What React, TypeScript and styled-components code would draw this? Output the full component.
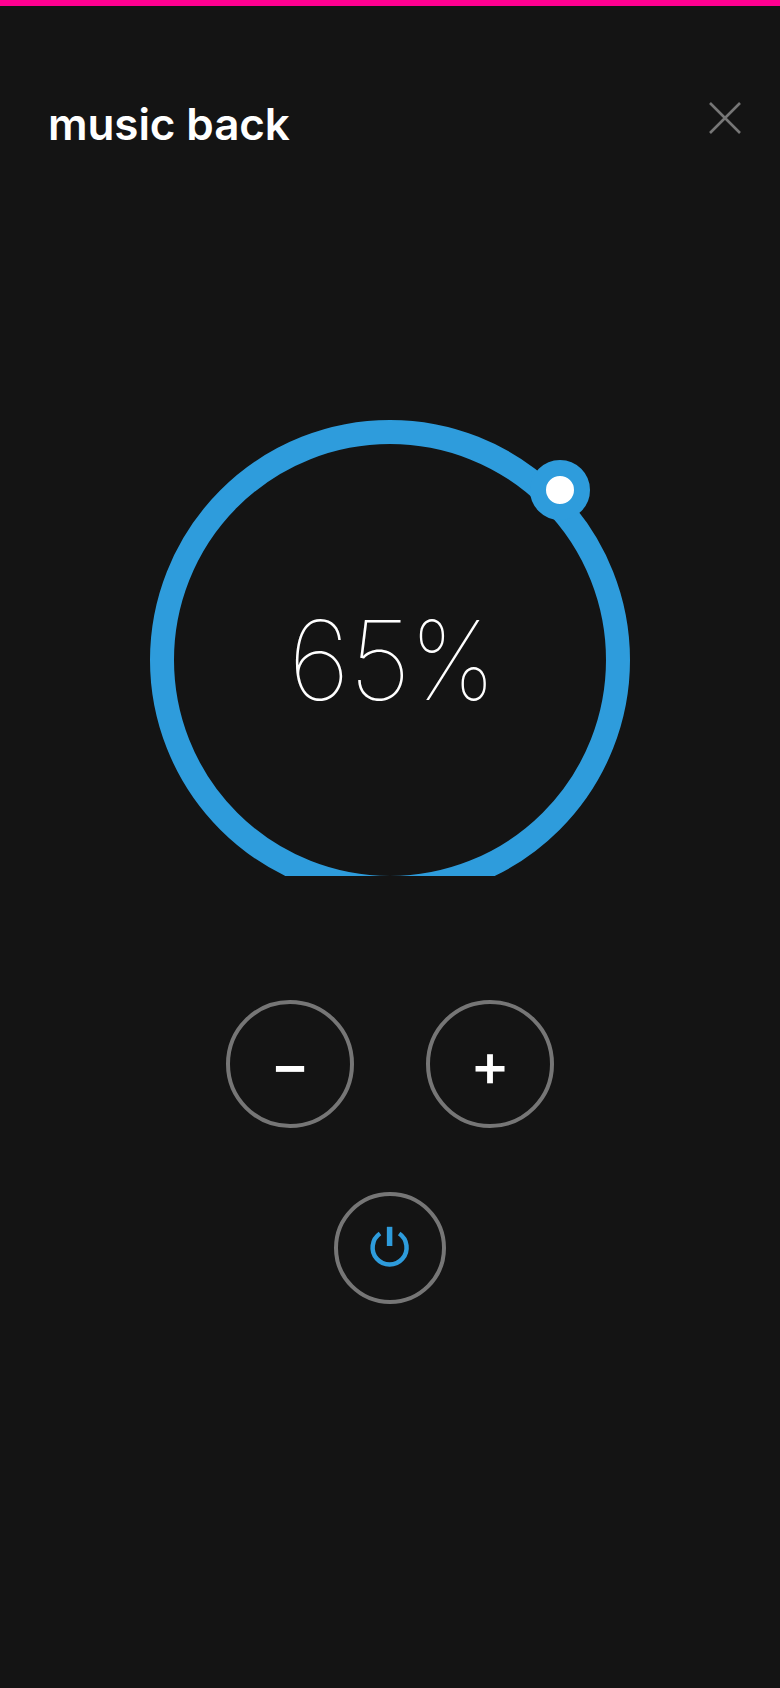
import React from 'react';
import styled, { createGlobalStyle } from 'styled-components';

const GlobalStyle = createGlobalStyle`
    html, body {
        margin: 0;
        padding: 0;
        background: #141414;
    }
    * {
        box-sizing: border-box;
    }
`;

const Page = styled.div`
    width: 780px;
    height: 1688px;
    background: #141414;
    font-family: Inter, "Liberation Sans", sans-serif;
    color: #fff;
    overflow: hidden;
`;

const TopBar = styled.div`
    height: 6px;
    background: #ff0090;
`;

const Header = styled.header`
    display: flex;
    justify-content: space-between;
    align-items: flex-start;
    padding: 88px 39px 0 48px;
`;

const Title = styled.h1`
    margin: 0;
    font-size: 44px;
    line-height: 60px;
    font-weight: 600;
    letter-spacing: -0.1px;
`;

const CloseButton = styled.button`
    display: flex;
    width: 32px;
    height: 32px;
    margin-top: 8px;
    padding: 0;
    border: none;
    background: none;
`;

const Dial = styled.div`
    position: relative;
    width: 480px;
    height: 456px;
    margin: 266px auto 0;
    overflow: hidden;
`;

const Ring = styled.div`
    display: flex;
    align-items: center;
    justify-content: center;
    width: 480px;
    height: 480px;
    border: 24px solid #2e9cdc;
    border-radius: 50%;
`;

const Value = styled.div`
    font-size: 110px;
    line-height: 1;
    font-weight: 100;
    letter-spacing: -1px;
`;

const Percent = styled.span`
    display: inline-block;
    margin-right: -10px;
    transform: scaleX(0.92);
    transform-origin: left center;
`;

const Knob = styled.div`
    position: absolute;
    top: 40px;
    left: 380px;
    width: 60px;
    height: 60px;
    border: 16px solid #2e9cdc;
    border-radius: 50%;
    background: #fff;
`;

const Controls = styled.div`
    display: flex;
    flex-direction: column;
    align-items: center;
    gap: 64px;
    margin-top: 124px;
`;

const StepRow = styled.div`
    display: flex;
    gap: 72px;
`;

const RoundButton = styled.button<{ size: number }>`
    display: flex;
    align-items: center;
    justify-content: center;
    width: ${props => props.size}px;
    height: ${props => props.size}px;
    padding: 0;
    border: 4px solid #767676;
    border-radius: 50%;
    background: none;
    color: #fff;
    font-family: inherit;
    font-size: 60px;
    line-height: 1;
    font-weight: 500;
`;

const App: React.FC = () => {
    return (
        <Page>
            <GlobalStyle />
            <TopBar />
            <Header>
                <Title>music back</Title>
                <CloseButton aria-label="close">
                    <svg width="32" height="32" viewBox="0 0 32 32" fill="none" stroke="#767676" strokeWidth="2.6">
                        <path d="M1 1 L31 31 M31 1 L1 31" />
                    </svg>
                </CloseButton>
            </Header>
            <Dial>
                <Ring>
                    <Value>65<Percent>%</Percent></Value>
                </Ring>
                <Knob />
            </Dial>
            <Controls>
                <StepRow>
                    <RoundButton size={128}>−</RoundButton>
                    <RoundButton size={128}>+</RoundButton>
                </StepRow>
                <RoundButton size={112} aria-label="power">
                    <svg width="44" height="44" viewBox="0 0 44 44" fill="none" stroke="#2e9cdc" strokeWidth="4.5">
                        <path d="M21.6 0.8 V20" strokeWidth="5.5" />
                        <path d="M12 7.5 A17 17 0 1 0 31.2 7.5" />
                    </svg>
                </RoundButton>
            </Controls>
        </Page>
    );
};

export default App;
